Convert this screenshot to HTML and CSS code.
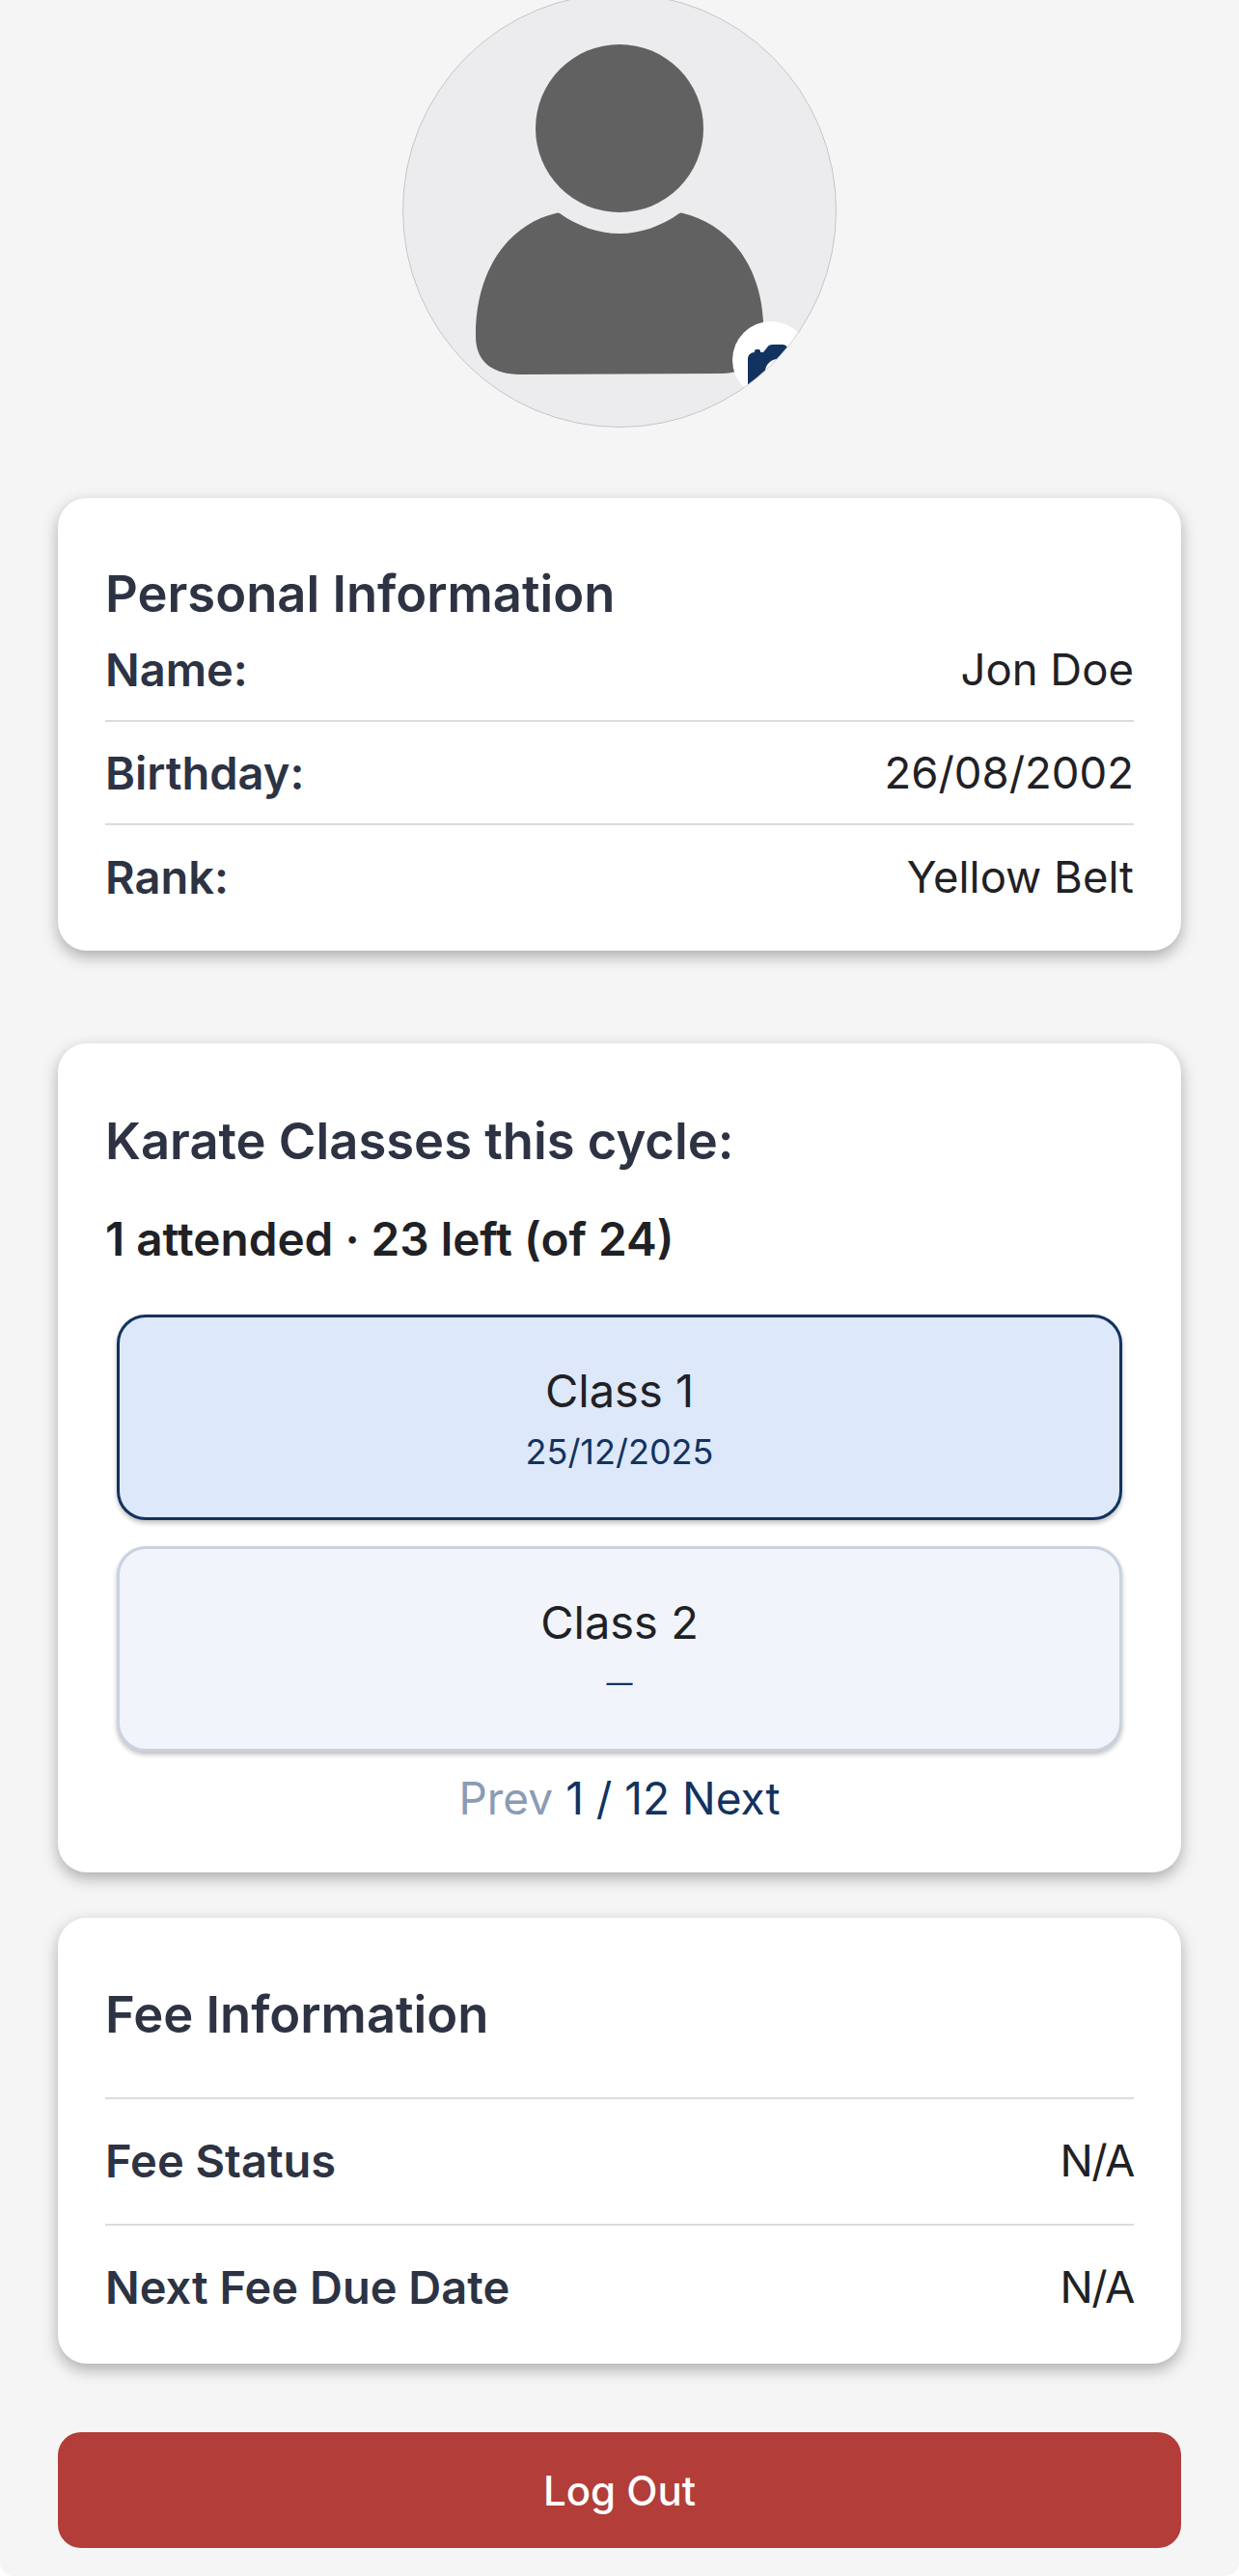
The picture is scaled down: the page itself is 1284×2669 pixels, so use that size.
FILE: index.html
```html
<!DOCTYPE html>
<html lang="en">
<head>
    <title>Profile</title>
    <meta name="viewport" content="width=device-width, initial-scale=1.0">
    <link rel="stylesheet" href="styles.css">
</head>
<body>
    <main class="page">
        <div class="avatar">
            <svg class="avatar-person" viewBox="0 0 448 448" aria-hidden="true">
                <circle cx="224" cy="139" r="87"/>
                <path d="M158 227 Q160 226 162 227 C180 240 202 248 224 248 C246 248 268 240 286 227 Q288 226 290 227 C335 238 370 278 373 339 L373 352 C373 375 362 392 330 393 L120 394 C90 394 75 378 75 355 L75 345 C78 280 112 238 158 227 Z"/>
            </svg>
            <div class="avatar-badge">
                <svg viewBox="0 0 48 48" aria-hidden="true">
                    <path fill-rule="evenodd" d="M0 15 C0 11 3 8 7 8 L7 7 C7 5.5 8 5 10 5 C12 5 13 5.5 13 7 L13 8 L16 8 L20 3 C21 1 23 0 26 0 L36 0 C38 0 40 1 41 3 L44 8 L48 8 L48 48 L0 48 Z M31 15 C24 15 18 21 18 28 C18 35 24 41 31 41 C38 41 44 35 44 28 C44 21 38 15 31 15 Z M31 19 C36 19 40 23 40 28 C40 33 36 37 31 37 C26 37 22 33 22 28 C22 23 26 19 31 19 Z"/>
                </svg>
            </div>
        </div>

        <section class="card card-personal">
            <h2 class="card-title">Personal Information</h2>
            <div class="info-row">
                <span class="info-label">Name:</span>
                <span class="info-value">Jon Doe</span>
            </div>
            <div class="info-row">
                <span class="info-label">Birthday:</span>
                <span class="info-value">26/08/2002</span>
            </div>
            <div class="info-row">
                <span class="info-label">Rank:</span>
                <span class="info-value">Yellow Belt</span>
            </div>
        </section>

        <section class="card card-classes">
            <h2 class="card-title">Karate Classes this cycle:</h2>
            <p class="class-summary">1 attended · 23 left (of 24)</p>
            <div class="class-tile class-tile-done">
                <span class="class-name">Class 1</span>
                <span class="class-date">25/12/2025</span>
            </div>
            <div class="class-tile">
                <span class="class-name">Class 2</span>
                <span class="class-date class-date-empty">—</span>
            </div>
            <div class="pager">
                <span class="pager-off">Prev</span>
                <span>1 / 12</span>
                <span>Next</span>
            </div>
        </section>

        <section class="card card-fee">
            <h2 class="card-title">Fee Information</h2>
            <div class="fee-row">
                <span class="info-label">Fee Status</span>
                <span class="info-value info-value-tight">N/A</span>
            </div>
            <div class="fee-row">
                <span class="info-label">Next Fee Due Date</span>
                <span class="info-value info-value-tight">N/A</span>
            </div>
        </section>

        <button class="logout">Log Out</button>
    </main>
</body>
</html>
```

FILE: styles.css
```css
html {
    height: 100%;
    background: #fff;
}
body {
    margin: 0;
    height: 100%;
    background: #f5f5f6;
    border-radius: 0 0 14px 14px;
    font-family: Inter, "Liberation Sans", sans-serif;
    color: #1f2125;
    overflow: hidden;
}
.page {
    padding: 0 60px;
}
.avatar {
    position: relative;
    box-sizing: border-box;
    width: 450px;
    height: 450px;
    margin: -7px auto 73px;
    border: 1px solid #c6c6ca;
    border-radius: 50%;
    background: #ececee;
    overflow: hidden;
}
.avatar-person {
    display: block;
    width: 448px;
    height: 448px;
    fill: #616161;
}
.avatar-badge {
    position: absolute;
    left: 341px;
    top: 339px;
    width: 80px;
    height: 80px;
    border-radius: 50%;
    background: #fff;
}
.avatar-badge svg {
    position: absolute;
    left: 16px;
    top: 24px;
    width: 48px;
    height: 48px;
    fill: #12335f;
}
.card {
    box-sizing: border-box;
    background: #fff;
    border-radius: 30px;
    box-shadow: 0 6px 16px rgba(0, 0, 0, 0.3);
    padding: 0 49px;
}
.card-personal {
    height: 469px;
    margin-bottom: 96px;
    padding-top: 74px;
}
.card-classes {
    height: 859px;
    margin-bottom: 47px;
    padding-top: 76px;
}
.card-fee {
    height: 462px;
    margin-bottom: 71px;
    padding-top: 75px;
}
.card-title {
    margin: 0;
    font-size: 52.5px;
    line-height: 50px;
    font-weight: 600;
    color: #2d3343;
}
.info-row {
    box-sizing: border-box;
    display: flex;
    justify-content: space-between;
    align-items: center;
    height: 107px;
    border-bottom: 2px solid #dcdcdc;
}
.info-row:first-of-type {
    height: 108px;
}
.info-row:last-of-type {
    border-bottom: 0;
}
.info-label {
    font-size: 47px;
    font-weight: 600;
    color: #2d3343;
}
.info-value {
    font-size: 45.5px;
    color: #1f2125;
}
.info-value-tight {
    letter-spacing: -1.5px;
}
.class-summary {
    margin: 47px 0 0;
    font-size: 47.7px;
    line-height: 60px;
    font-weight: 600;
}
.class-tile {
    box-sizing: border-box;
    display: flex;
    flex-direction: column;
    align-items: center;
    justify-content: center;
    height: 213px;
    margin: 27px 12px 0;
    border: 3px solid #c9d2e0;
    border-radius: 30px;
    background: #f1f4fa;
    box-shadow: 0 3px 5px rgba(0, 0, 0, 0.25);
}
.class-tile-done {
    margin-top: 48px;
    border-color: #12335f;
    background: #dde8fa;
}
.class-name {
    font-size: 47px;
    line-height: 58px;
}
.class-date {
    margin-top: 12px;
    font-size: 36px;
    line-height: 44px;
    color: #12335f;
}
.class-date-empty {
    font-size: 27px;
}
.pager {
    display: flex;
    justify-content: center;
    gap: 13px;
    margin-top: 18px;
    font-size: 46px;
    line-height: 60px;
    color: #12335f;
}
.pager-off {
    color: #8a9bb4;
}
.card-fee .card-title {
    margin-bottom: 61px;
}
.fee-row {
    box-sizing: border-box;
    display: flex;
    justify-content: space-between;
    align-items: center;
    height: 131px;
    padding-bottom: 2px;
    border-top: 2px solid #dcdcdc;
}
.logout {
    display: block;
    width: 100%;
    height: 120px;
    border: 0;
    border-radius: 24px;
    background: #b33d39;
    color: #fff;
    font-family: inherit;
    font-size: 42px;
    font-weight: 500;
}
```
